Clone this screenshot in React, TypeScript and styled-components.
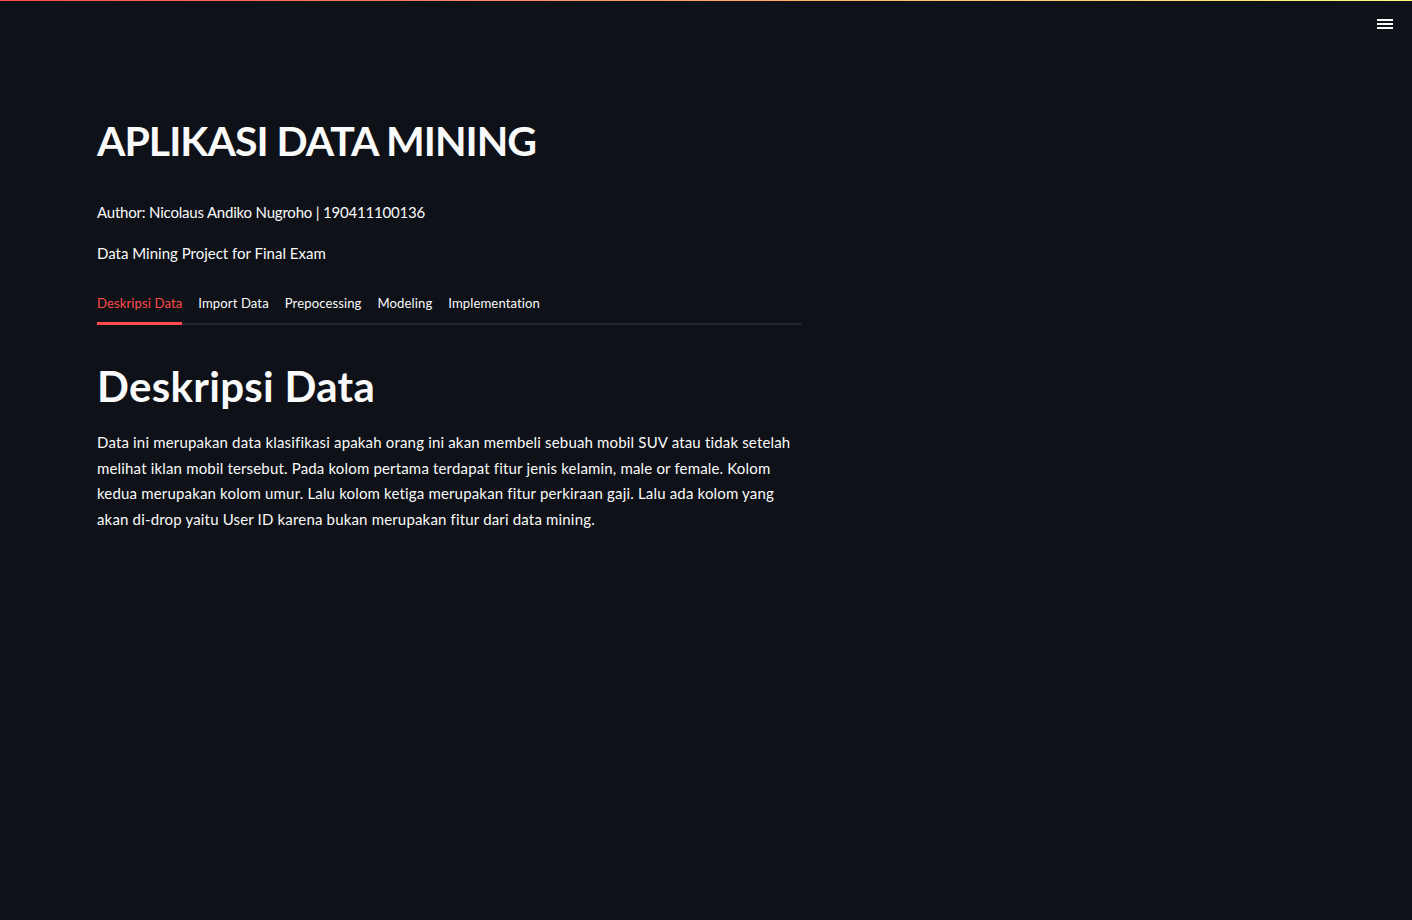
import React, { useState } from "react";
import styled, { createGlobalStyle } from "styled-components";

const Global = createGlobalStyle`
  html, body {
    margin: 0;
    padding: 0;
    background: #0e1117;
  }
  body {
    font-family: Lato, "Noto Sans", sans-serif;
    color: #fafafa;
  }
`;

const Page = styled.div`
  min-height: 920px;
  background: #0e1117;
  display: flex;
  flex-direction: column;
`;

const Decoration = styled.div`
  height: 1px;
  background: linear-gradient(90deg, #ff4b4b, #fffd80);
`;

const Header = styled.header`
  display: flex;
  justify-content: flex-end;
  padding: 17px 19px 0 0;
  height: 24px;
`;

const MenuButton = styled.button`
  background: none;
  border: none;
  padding: 0;
  width: 16px;
  height: 14px;
  display: flex;
  cursor: pointer;
`;

const Main = styled.main`
  padding: 72px 0 0 97px;
  width: 704px;
  display: flex;
  flex-direction: column;
`;

const Title = styled.h1<{ $mt?: number; $caps?: boolean }>`
  margin: ${(p) => p.$mt ?? 0}px 0 0;
  font-size: ${(p) => (p.$caps ? 41 : 42)}px;
  letter-spacing: ${(p) => (p.$caps ? -1 : 0.3)}px;
  font-weight: 700;
  line-height: 53px;
  color: #fafafa;
`;

const Text = styled.p<{ $mt: number; $tight?: boolean }>`
  margin: ${(p) => p.$mt}px 0 0;
  font-size: 15px;
  letter-spacing: ${(p) => (p.$tight ? -0.2 : 0)}px;
  line-height: 26px;
  color: #fafafa;
`;

const TabList = styled.div`
  margin-top: 27px;
  display: flex;
  gap: 16px;
  box-shadow: inset 0 -2px 0 #262730;
`;

const Tab = styled.button<{ $active: boolean }>`
  background: none;
  border: none;
  border-bottom: 3px solid ${(p) => (p.$active ? "#ff4b4b" : "transparent")};
  padding: 0 0 9px;
  font-family: inherit;
  font-size: 13.1px;
  letter-spacing: 0.1px;
  line-height: 20px;
  color: ${(p) => (p.$active ? "#ff4b4b" : "#fafafa")};
  cursor: pointer;
`;

const Body = styled.p`
  margin: 17px 0 0;
  font-size: 15px;
  letter-spacing: 0.17px;
  line-height: 25.7px;
  color: #fafafa;
`;

const tabs = ["Deskripsi Data", "Import Data", "Prepocessing", "Modeling", "Implementation"];

export default function App() {
  const [active, setActive] = useState(0);
  return (
    <Page>
      <Global />
      <Decoration />
      <Header>
        <MenuButton aria-label="menu">
          <svg width="16" height="12" viewBox="0 0 16 12" fill="#fafafa">
            <rect x="0" y="1" width="16" height="2" />
            <rect x="0" y="5" width="16" height="2" />
            <rect x="0" y="9" width="16" height="2" />
          </svg>
        </MenuButton>
      </Header>
      <Main>
        <Title $caps>APLIKASI DATA MINING</Title>
        <Text $mt={32} $tight>
          Author: Nicolaus Andiko Nugroho | 190411100136
        </Text>
        <Text $mt={15}>Data Mining Project for Final Exam</Text>
        <TabList>
          {tabs.map((t, i) => (
            <Tab key={t} $active={i === active} onClick={() => setActive(i)}>
              {t}
            </Tab>
          ))}
        </TabList>
        <Title $mt={35}>Deskripsi Data</Title>
        <Body>
          Data ini merupakan data klasifikasi apakah orang ini akan membeli sebuah mobil SUV atau tidak setelah
          melihat iklan mobil tersebut. Pada kolom pertama terdapat fitur jenis kelamin, male or female. Kolom
          kedua merupakan kolom umur. Lalu kolom ketiga merupakan fitur perkiraan gaji. Lalu ada kolom yang
          akan di-drop yaitu User ID karena bukan merupakan fitur dari data mining.
        </Body>
      </Main>
    </Page>
  );
}
